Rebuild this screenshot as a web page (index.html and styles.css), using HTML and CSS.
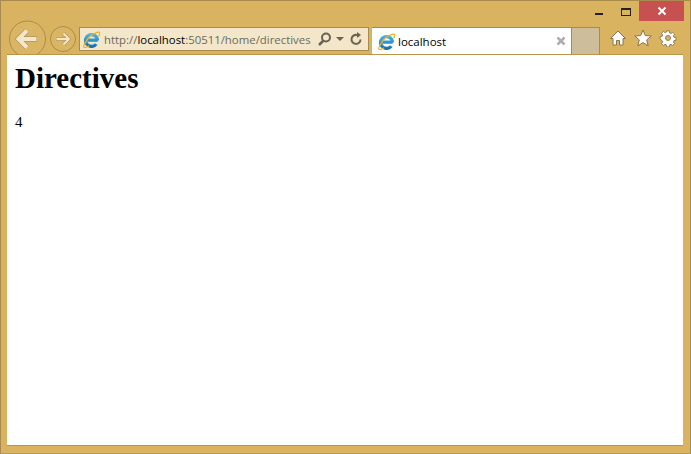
FILE: index.html
```html
<!DOCTYPE html>
<html lang="en">
<head>
    <meta charset="UTF-8">
    <title>localhost</title>
    <link rel="stylesheet" href="styles.css">
</head>
<body>
<svg class="defs" width="0" height="0">
    <defs>
        <linearGradient id="ieblue" gradientUnits="userSpaceOnUse" x1="0" y1="3" x2="0" y2="16">
            <stop offset="0" stop-color="#45b6ec"/>
            <stop offset="1" stop-color="#1473bb"/>
        </linearGradient>
        <symbol id="ie" viewBox="0 0 18 18">
            <path d="M4.500 9.600h11M15.300 10A6.300 6.300 0 1 0 14 13.900" fill="none" stroke="url(#ieblue)" stroke-width="3.400"/>
            <path d="M3 11.500C1 14.500 .3 16.500 1.100 17.200c1 .7 3.400-.2 5.400-1.600M3 11.500C5 7.500 9.500 3.500 13 2.200c2.400-1 4.200-1.200 4.600-.4.500.8-.1 2.200-1.200 3.800" fill="none" stroke="#f2b01e" stroke-width="1.400"/>
        </symbol>
    </defs>
</svg>
<div class="window">
    <div class="titlebar">
        <span class="min"></span>
        <span class="max"></span>
        <div class="close">
            <svg width="10" height="10" viewBox="0 0 10 10"><path d="M1.500 1.500l7 7M8.500 1.500l-7 7" stroke="#fff" stroke-width="2"/></svg>
        </div>
    </div>
    <div class="toolbar">
        <svg class="back" width="39" height="33" viewBox="0 0 39 33">
            <circle cx="19.500" cy="18" r="18" fill="#dab564" stroke="#a88c4f"/>
            <path d="M19 9.500l-8.500 8.500 8.500 8.500M12 18h17" fill="none" stroke="#b09660" stroke-width="5.500"/>
            <path d="M19 9.500l-8.500 8.500 8.500 8.500M12 18h16.500" fill="none" stroke="#f3e6c9" stroke-width="4"/>
        </svg>
        <svg class="forward" width="26" height="26" viewBox="0 0 26 26">
            <circle cx="13" cy="13" r="12.500" fill="#dab564" stroke="#a88c4f"/>
            <path d="M13.500 7.500l5.500 5.500-5.500 5.500M6 13h12" fill="none" stroke="#b09660" stroke-width="3.200"/>
            <path d="M13.500 7.500l5.500 5.500-5.500 5.500M6.500 13h11.500" fill="none" stroke="#f3e6c9" stroke-width="2"/>
        </svg>
        <div class="address">
            <svg class="favicon" width="17" height="17"><use href="#ie"/></svg>
            <span class="url">http://<b>localhost</b>:50511/home/directives</span>
            <svg class="search" width="15" height="15" viewBox="0 0 15 15">
                <circle cx="9" cy="5.500" r="4" fill="none" stroke="#6b6351" stroke-width="2"/>
                <path d="M6.500 8.500l-4.500 4.500" stroke="#6b6351" stroke-width="2.500"/>
            </svg>
            <span class="caret"></span>
            <svg class="refresh" width="13" height="14" viewBox="0 0 13 14">
                <path d="M10.500 7.500A4.500 4.500 0 1 1 7 3" fill="none" stroke="#6b6351" stroke-width="2"/>
                <path d="M7 0l4 3-4 3z" fill="#6b6351"/>
            </svg>
        </div>
        <div class="tab">
            <svg class="favicon" width="17" height="17"><use href="#ie"/></svg>
            <span class="tab-title">localhost</span>
            <svg class="tab-close" width="10" height="10" viewBox="0 0 10 10"><path d="M1.500 1.500l7 7M8.500 1.500l-7 7" stroke="#aeaeae" stroke-width="2.500"/></svg>
        </div>
        <div class="newtab"></div>
        <div class="tools">
            <svg width="18" height="18" viewBox="0 0 18 18">
                <path d="M9 2L1.500 9.500h2.500V16h3.500v-4.500h3V16H14V9.500h2.500z" fill="#fff" stroke="#8a7548"/>
            </svg>
            <svg width="18" height="18" viewBox="0 0 18 18">
                <path d="M9 1l2.300 5.600 6 .4-4.600 3.900 1.500 5.900L9 13.600l-5.200 3.200 1.500-5.900L.7 7l6-.4z" fill="#fff" stroke="#8a7548"/>
            </svg>
            <svg width="18" height="18" viewBox="0 0 18 18">
                <path d="M7.500 1h3l.4 2.300 1.500.6 1.900-1.300 2.100 2.100-1.300 1.900.6 1.500 2.300.4v3l-2.300.4-.6 1.500 1.300 1.900-2.100 2.100-1.900-1.300-1.500.6-.4 2.300h-3l-.4-2.300-1.500-.6-1.900 1.300-2.100-2.100 1.300-1.900-.6-1.500L.1 10.500v-3l2.300-.4.6-1.500-1.300-1.900 2.100-2.100 1.900 1.300 1.500-.6zM9 6.200a2.800 2.800 0 1 0 0 5.600 2.800 2.800 0 0 0 0-5.600z" transform="translate(1 1) scale(.89)" fill="#fff" stroke="#8a7548" fill-rule="evenodd"/>
            </svg>
        </div>
    </div>
    <div class="content">
        <h1>Directives</h1>
        <p>4</p>
    </div>
</div>
</body>
</html>
```

FILE: styles.css
```css
html, body {
    margin: 0;
    height: 100%;
}

.defs {
    display: block;
    height: 0;
}

.window {
    box-sizing: border-box;
    height: 454px;
    background: #d9b360;
    border: 1px solid #a88c4f;
    border-bottom-color: #b89a58;
    display: flex;
    flex-direction: column;
    font-family: "Open Sans", "Liberation Sans", sans-serif;
}

.titlebar {
    height: 20px;
    flex: none;
    display: flex;
    align-items: flex-start;
    justify-content: flex-end;
    padding-right: 6px;
}

.min {
    width: 8px;
    height: 2px;
    background: #222;
    margin: 12px 18px 0 0;
}

.max {
    box-sizing: border-box;
    width: 10px;
    height: 8px;
    border: 1px solid #222;
    border-top-width: 2px;
    margin: 7px 8px 0 0;
}

.close {
    width: 45px;
    height: 20px;
    background: #c75050;
    display: flex;
    align-items: center;
    justify-content: center;
}

.toolbar {
    height: 33px;
    flex: none;
    display: flex;
    align-items: flex-start;
}

.back {
    margin-left: 7px;
    overflow: visible;
}

.forward {
    margin: 5px 0 0 3px;
}

.address {
    box-sizing: border-box;
    width: 290px;
    height: 24px;
    margin: 6px 0 0 3px;
    background: #f3e6c9;
    border: 1px solid #a88c4f;
    display: flex;
    align-items: center;
    padding-left: 3px;
}

.url {
    font-size: 11.4px;
    color: #6f6a5c;
    margin-left: 4px;
    white-space: nowrap;
    width: 208px;
    flex: none;
}

.url b {
    font-weight: 400;
    color: #000;
}

.search {
    margin-left: 5px;
}

.caret {
    width: 0;
    height: 0;
    border: 4px solid transparent;
    border-top-color: #6b6351;
    border-bottom: 0;
    margin: 0 6px 0 4px;
}

.tab {
    box-sizing: border-box;
    width: 199px;
    height: 27px;
    margin: 6px 0 0 3px;
    background: #fff;
    border-top: 1px solid #a88c4f;
    display: flex;
    align-items: center;
    padding: 0 5px 0 6px;
}

.tab-title {
    font-size: 11.5px;
    color: #000;
    margin-left: 3px;
    flex: 1;
}

.newtab {
    box-sizing: border-box;
    width: 29px;
    height: 27px;
    margin-top: 6px;
    background: #cdbd9b;
    border: 1px solid #a88c4f;
    border-bottom: 0;
}

.tools {
    display: flex;
    gap: 7px;
    margin: 8px 0 0 9px;
}

.content {
    flex: 1;
    margin: 0 7px 7px 6px;
    background: #fff;
    border: solid #b8964c;
    border-width: 1px 0 1px 0;
    padding: 0 8px;
    font-family: "Liberation Serif", serif;
    font-size: 15px;
    color: #000;
    overflow: hidden;
}

.content h1 {
    font-size: 29px;
    margin: 7px 0 0;
}

.content p {
    margin: 19px 0;
}
```
